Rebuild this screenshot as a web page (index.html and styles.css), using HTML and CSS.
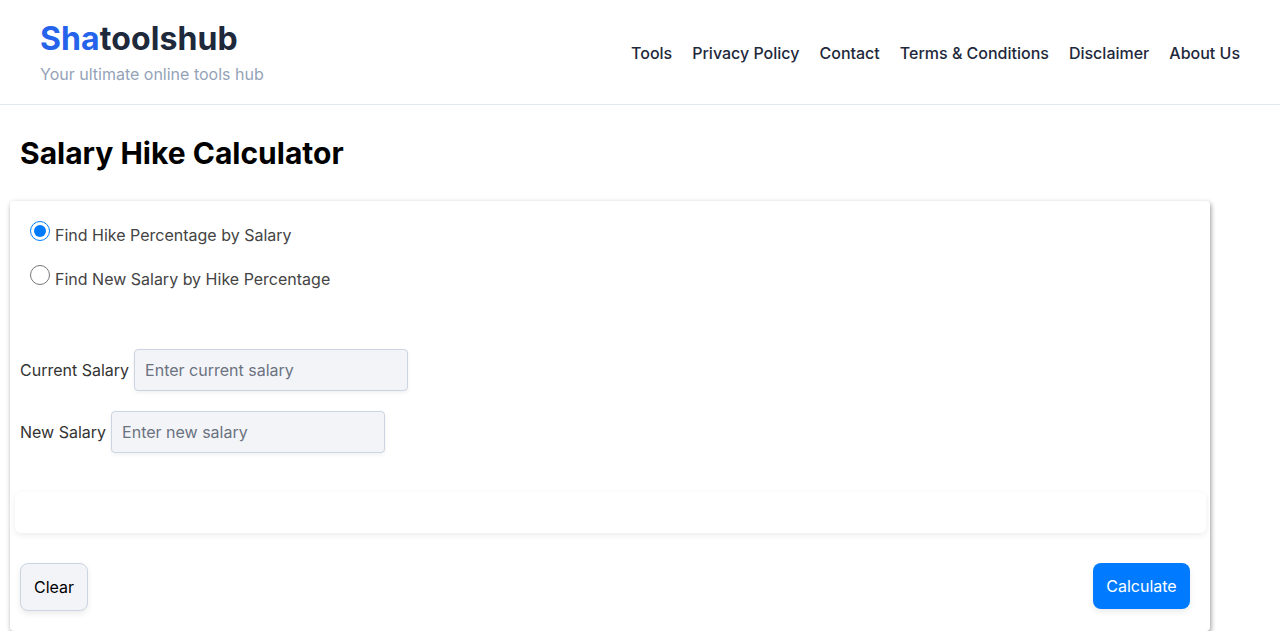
FILE: index.html
```html
<!DOCTYPE html>
<html>
<head>
<meta charset="utf-8">
<link rel="stylesheet" href="styles.css">
</head>
<body>
<header class="site-header">
  <div class="brand">
    <div class="logo"><span class="logo-accent">Sha</span>toolshub</div>
    <div class="tagline">Your ultimate online tools hub</div>
  </div>
  <nav class="nav">
    <a href="#">Tools</a>
    <a href="#">Privacy Policy</a>
    <a href="#">Contact</a>
    <a href="#">Terms &amp; Conditions</a>
    <a href="#">Disclaimer</a>
    <a href="#">About Us</a>
  </nav>
</header>
<main class="main">
  <h1 class="page-title">Salary Hike Calculator</h1>
  <section class="card">
    <div class="options">
      <label class="option"><input type="radio" name="mode" checked><span>Find Hike Percentage by Salary</span></label>
      <label class="option"><input type="radio" name="mode"><span>Find New Salary by Hike Percentage</span></label>
    </div>
    <div class="fields">
      <div class="field"><label>Current Salary</label><input type="text" placeholder="Enter current salary"></div>
      <div class="field"><label>New Salary</label><input type="text" placeholder="Enter new salary"></div>
    </div>
    <div class="result"></div>
    <div class="actions">
      <button class="btn btn-clear">Clear</button>
      <button class="btn btn-calc">Calculate</button>
    </div>
  </section>
</main>
</body>
</html>
```
FILE: styles.css
```css
* { box-sizing: border-box; }
body {
  margin: 0;
  font-family: Inter, "Noto Sans", sans-serif;
  background: #fff;
  color: #333;
}
.site-header {
  display: flex;
  align-items: center;
  justify-content: space-between;
  padding: 19px 40px 18px;
  border-bottom: 1px solid #e2e8f0;
}
.logo {
  font-size: 32px;
  font-weight: 700;
  line-height: 40px;
  color: #1e293b;
  letter-spacing: 0.1px;
}
.logo-accent { color: #2563eb; }
.tagline {
  margin-top: 3px;
  font-size: 16px;
  line-height: 24px;
  color: #94a3b8;
}
.nav {
  display: flex;
  gap: 20px;
}
.nav a {
  font-size: 16px;
  font-weight: 500;
  color: #1e293b;
  text-decoration: none;
}
.main { padding: 0 10px; }
.page-title {
  margin: 30px 0 30px 10px;
  font-size: 30px;
  line-height: 36px;
  font-weight: 700;
  color: #000;
}
.card {
  width: 1200px;
  background: #fff;
  border-radius: 4px;
  padding: 10px;
  box-shadow: 1px 2px 5px rgba(0,0,0,0.4);
}
.options {
  margin-top: 10px;
  padding-left: 10px;
  display: flex;
  flex-direction: column;
  gap: 16px;
}
.option {
  display: flex;
  align-items: flex-start;
  height: 28px;
  font-size: 16px;
  line-height: 28px;
  color: #444;
}
.option input {
  width: 20px;
  height: 20px;
  margin: 0 5px 0 0;
  accent-color: #007bff;
}
.fields {
  margin-top: 56px;
  display: flex;
  flex-direction: column;
  gap: 20px;
}
.field {
  display: flex;
  align-items: center;
  gap: 5px;
}
.field label {
  font-size: 16px;
  color: #333;
}
.field input {
  width: 274px;
  height: 42px;
  padding: 0 10px;
  font-family: inherit;
  font-size: 16px;
  background: #f3f4f8;
  border: 1px solid #cbd5e1;
  border-radius: 4px;
  box-shadow: 0 2px 4px rgba(0,0,0,0.06);
  outline: none;
}
.field input::placeholder { color: #6b7280; }
.result {
  margin: 39px 0 0 -5px;
  width: 1191px;
  height: 41px;
  background: #fff;
  border-radius: 6px;
  box-shadow: 0 2px 6px rgba(0,0,0,0.08);
}
.actions {
  margin-top: 30px;
  display: flex;
  justify-content: space-between;
  padding: 0 10px 10px 0;
}
.btn {
  font-family: inherit;
  font-size: 16px;
  border-radius: 8px;
  cursor: pointer;
  box-shadow: 0 3px 6px rgba(0,0,0,0.08);
}
.btn-clear {
  width: 68px;
  height: 48px;
  background: #f3f4f8;
  color: #000;
  border: 1px solid #cbd5e1;
}
.btn-calc {
  width: 97px;
  height: 46px;
  background: #007bff;
  color: #fff;
  border: none;
}
```
